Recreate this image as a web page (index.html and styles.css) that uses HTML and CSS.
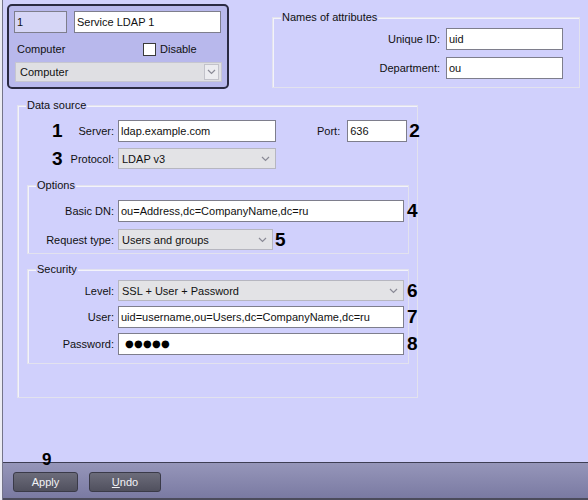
FILE: index.html
```html
<!DOCTYPE html>
<html>
<head>
<meta charset="utf-8">
<link rel="stylesheet" href="styles.css">
</head>
<body>
<div class="window">
  <div class="main">
    <div class="top">
      <div class="card">
        <div class="card-row1">
          <div class="field id-field">1</div>
          <div class="field name-field">Service LDAP 1</div>
        </div>
        <div class="card-row2">
          <span class="card-lbl">Computer</span>
          <span class="check"><span class="box"></span>Disable</span>
        </div>
        <div class="select card-select">
          <span>Computer</span>
          <span class="arrow-btn"><svg width="9" height="6" viewBox="0 0 9 6"><polyline points="1,1 4.5,4.5 8,1" fill="none" stroke="#8a8a96" stroke-width="1.2"/></svg></span>
        </div>
      </div>
      <div class="group attrs">
        <div class="legend">Names of attributes</div>
        <div class="attr-row first"><span>Unique ID:</span><div class="field w117">uid</div></div>
        <div class="attr-row second"><span>Department:</span><div class="field w117">ou</div></div>
      </div>
    </div>

    <div class="group source">
      <div class="legend">Data source</div>
      <div class="row r-server">
        <div class="lblcell wide"><span class="num">1</span><span>Server:</span></div>
        <div class="field w158">ldap.example.com</div>
        <span class="port-lbl">Port:</span>
        <div class="field w60 port-field">636</div>
        <span class="rnum n2">2</span>
      </div>
      <div class="row r-protocol sel-row">
        <div class="lblcell wide"><span class="num">3</span><span>Protocol:</span></div>
        <div class="select w158"><span>LDAP v3</span><svg class="chev" width="9" height="6" viewBox="0 0 9 6"><polyline points="1,1 4.5,4.5 8,1" fill="none" stroke="#8a8a96" stroke-width="1.2"/></svg></div>
      </div>

      <div class="group options">
        <div class="legend">Options</div>
        <div class="row r-dn">
          <div class="lblcell"><span>Basic DN:</span></div>
          <div class="field w286">ou=Address,dc=CompanyName,dc=ru</div>
          <span class="rnum">4</span>
        </div>
        <div class="row r-req sel-row">
          <div class="lblcell"><span>Request type:</span></div>
          <div class="select w155"><span>Users and groups</span><svg class="chev" width="9" height="6" viewBox="0 0 9 6"><polyline points="1,1 4.5,4.5 8,1" fill="none" stroke="#8a8a96" stroke-width="1.2"/></svg></div>
          <span class="rnum n5">5</span>
        </div>
      </div>

      <div class="group security">
        <div class="legend">Security</div>
        <div class="row r-level sel-row">
          <div class="lblcell"><span>Level:</span></div>
          <div class="select w286"><span>SSL + User + Password</span><svg class="chev" width="9" height="6" viewBox="0 0 9 6"><polyline points="1,1 4.5,4.5 8,1" fill="none" stroke="#8a8a96" stroke-width="1.2"/></svg></div>
          <span class="rnum">6</span>
        </div>
        <div class="row r-user">
          <div class="lblcell"><span>User:</span></div>
          <div class="field w286">uid=username,ou=Users,dc=CompanyName,dc=ru</div>
          <span class="rnum">7</span>
        </div>
        <div class="row r-pass">
          <div class="lblcell"><span>Password:</span></div>
          <div class="field w286 pass">●●●●●</div>
          <span class="rnum">8</span>
        </div>
      </div>
    </div>
  </div>

  <div class="bar">
    <span class="bnum">9</span>
    <div class="btn apply">Apply</div>
    <div class="btn undo"><u>U</u>ndo</div>
  </div>
</div>
</body>
</html>
```

FILE: styles.css
```css
html, body {
  margin: 0;
  padding: 0;
}

body {
  background: #d0d0fc;
  font-family: "Liberation Sans", Arial, sans-serif;
  font-size: 11px;
  color: #111;
}

.window {
  width: 588px;
  height: 500px;
  box-sizing: border-box;
  padding-left: 3px;
  background: linear-gradient(to right, #ececf4 0, #ececf4 2px, #74748a 2px, #74748a 3px, transparent 3px);
  display: flex;
  flex-direction: column;
}

.main {
  height: 462px;
  flex: 0 0 462px;
  background: #d0d0fc;
}

.top {
  display: flex;
  align-items: flex-start;
  height: 89px;
}

/* ---------- card ---------- */
.card {
  flex-shrink: 0;
  margin: 4px 0 0 4px;
  width: 222px;
  height: 85px;
  box-sizing: border-box;
  border: 2px solid #2a2a42;
  border-radius: 5px;
  background: #b8b8ec;
  padding: 5px 0 0 5px;
}

.card-row1 {
  display: flex;
  gap: 7px;
}

.field {
  flex-shrink: 0;
  box-sizing: border-box;
  height: 22px;
  background: #fff;
  border: 1px solid #7e7e8c;
  padding: 0 2px;
  line-height: 20px;
  white-space: nowrap;
  overflow: hidden;
}

.id-field {
  width: 53px;
  background: #d6d6f6;
}

.name-field {
  width: 147px;
}

.card-row2 {
  display: grid;
  grid-template-columns: 129px auto;
  align-items: center;
  height: 14px;
  margin-top: 9px;
}

.card-lbl {
  padding-left: 3px;
}

.check {
  display: flex;
  align-items: center;
}

.box {
  width: 13px;
  height: 13px;
  box-sizing: border-box;
  border: 1px solid #3a3a3a;
  background: #fff;
  margin-right: 4px;
}

.select {
  flex-shrink: 0;
  box-sizing: border-box;
  height: 21px;
  background: #e3e3e6;
  border: 1px solid #b6b6c0;
  display: flex;
  align-items: center;
  padding-left: 3px;
  white-space: nowrap;
}

.card-select {
  width: 207px;
  height: 20px;
  margin: 6px 0 0 1px;
  background: #dfdfe3;
  border-color: #c6c6d0;
  padding-left: 4px;
}

.arrow-btn {
  margin-left: auto;
  margin-right: 2px;
  width: 15px;
  height: 16px;
  box-sizing: border-box;
  border: 1px solid #c2c2ca;
  background: #ececf0;
  display: flex;
  align-items: center;
  justify-content: center;
}

.chev {
  margin-left: auto;
  margin-right: 5px;
}

/* ---------- groups ---------- */
.group {
  flex-shrink: 0;
  box-sizing: border-box;
  border: 1px solid #e2e2ee;
  box-shadow: inset 1px 1px 0 #f3f3fa;
}

.legend {
  width: max-content;
  margin: -7px 0 0 8px;
  padding: 0 1px;
  line-height: 13px;
  background: #d0d0fc;
  color: #111;
}

.attrs {
  margin: 17px 0 0 43px;
  width: 308px;
  height: 71px;
}

.attr-row {
  display: flex;
  justify-content: flex-end;
  align-items: center;
  gap: 6px;
  padding-right: 16px;
}

.attr-row.first {
  margin-top: 4px;
}

.attr-row.second {
  margin-top: 7px;
}

.w117 { width: 117px; }
.w158 { width: 158px; }
.w60 { width: 60px; }
.w286 { width: 286px; }
.w155 { width: 155px; }

.source {
  margin: 16px 0 0 14px;
  width: 401px;
  padding-bottom: 33px;
}

.row {
  display: flex;
  align-items: center;
  height: 22px;
}

.row > * {
  flex-shrink: 0;
}

.sel-row {
  height: 21px;
}

.lblcell {
  box-sizing: border-box;
  width: 86px;
  margin-right: 4px;
  display: flex;
  justify-content: flex-end;
  align-items: center;
  white-space: nowrap;
}

.lblcell.wide {
  width: 96px;
  justify-content: space-between;
}

.num {
  margin-left: 34px;
  font-size: 19px;
  font-weight: bold;
  line-height: 20px;
  color: #000;
}

.rnum {
  margin-left: 3px;
  font-size: 19px;
  font-weight: bold;
  line-height: 20px;
  color: #000;
}

.n2, .n5 {
  margin-left: 2px;
}

.r-server { margin-top: 8px; }
.r-protocol { margin-top: 6px; }

.port-lbl {
  margin-left: 41px;
}

.port-field {
  margin-left: 7px;
}

.options {
  margin: 16px 8px 0 9px;
  padding-bottom: 3px;
}

.r-dn { margin-top: 8px; }
.r-req { margin-top: 7px; }

.security {
  margin: 15px 8px 0 9px;
  padding-bottom: 8px;
}

.r-level { margin-top: 4px; }
.r-user { margin-top: 5px; }
.r-pass { margin-top: 5px; }

.pass {
  font-family: "DejaVu Sans", sans-serif;
  font-size: 10px;
  padding-left: 6px;
  letter-spacing: 0.3px;
  color: #000;
}

/* ---------- bottom bar ---------- */
.bar {
  position: relative;
  flex: 0 0 38px;
  box-sizing: border-box;
  border-top: 1px solid #3e3e54;
  border-bottom: 2px solid #4c4c5c;
  background: linear-gradient(#9696ba, #7a7aa2);
  display: flex;
  align-items: flex-start;
  gap: 11px;
  padding: 9px 0 0 10px;
}

.bnum {
  position: absolute;
  left: 39px;
  top: -12px;
  font-size: 17px;
  font-weight: bold;
  line-height: 17px;
  color: #000;
}

.btn {
  box-sizing: border-box;
  height: 20px;
  border: 1px solid #3a3a48;
  border-radius: 3px;
  background: linear-gradient(#6c6c7a, #50505e);
  color: #f2f2f6;
  text-align: center;
  line-height: 18px;
}

.apply { width: 65px; }
.undo { width: 72px; }
```
